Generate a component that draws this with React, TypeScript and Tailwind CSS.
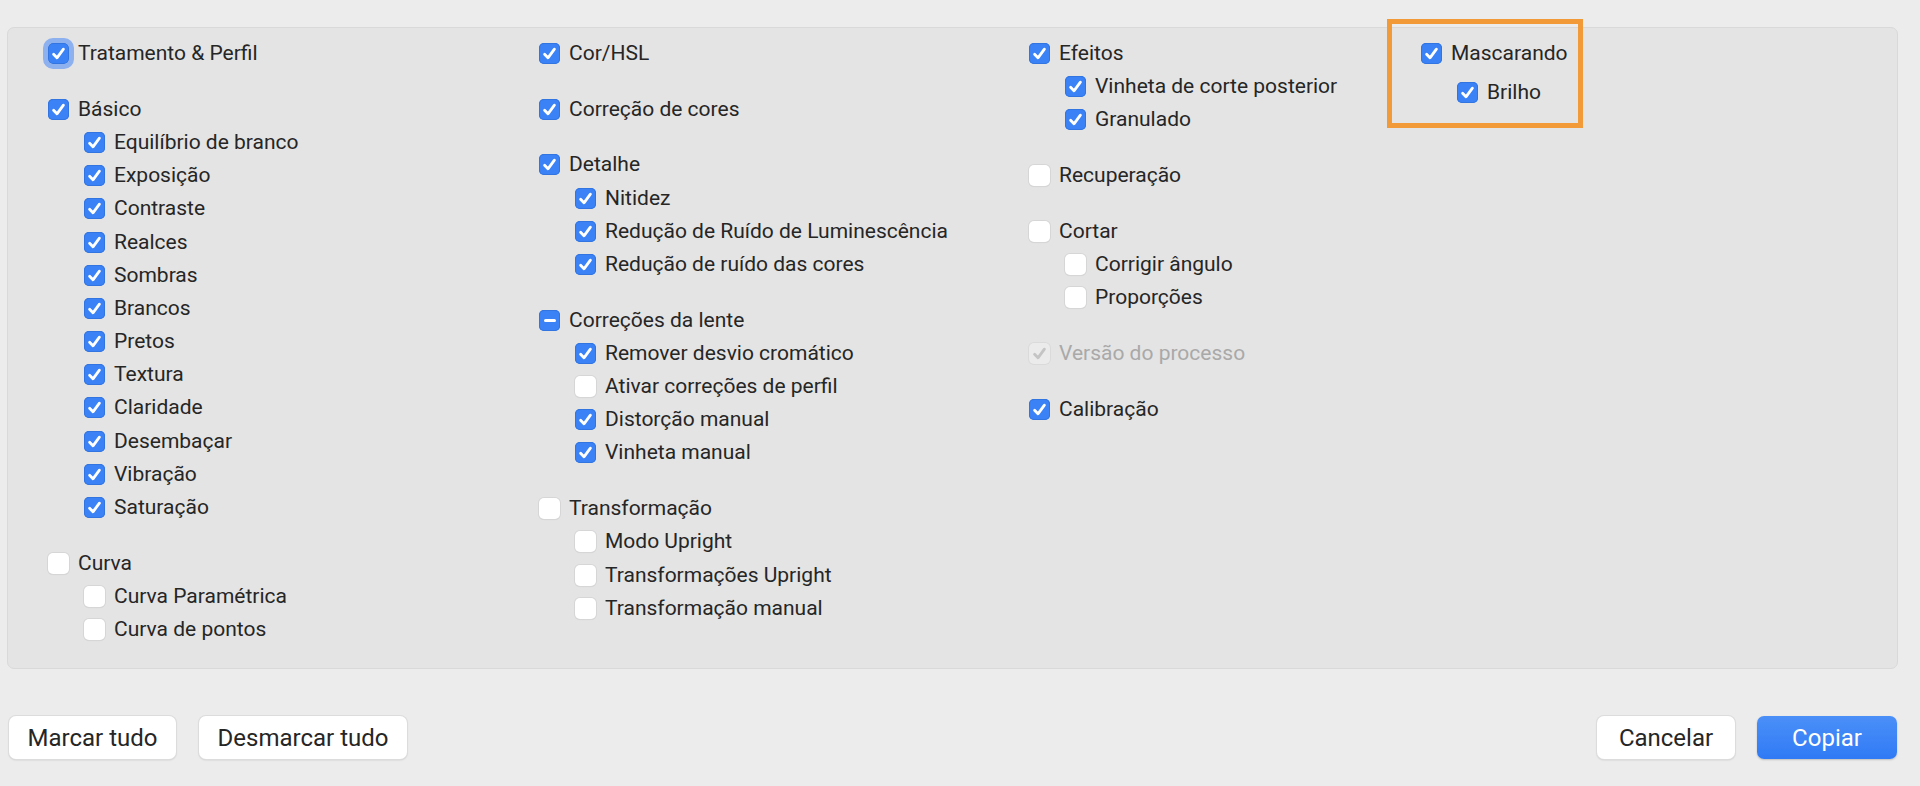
import React from 'react'

type State = 'on' | 'off' | 'mixed' | 'disabled'

interface Item {
  label: string
  state: State
  focus?: boolean
  children?: Item[]
}

const on = (label: string): Item => ({ label, state: 'on' })
const off = (label: string): Item => ({ label, state: 'off' })

const columns: { width: string; groups: Item[] }[] = [
  {
    width: 'w-[491px]',
    groups: [
      { label: 'Tratamento & Perfil', state: 'on', focus: true },
      {
        label: 'Básico',
        state: 'on',
        children: [
          'Equilíbrio de branco',
          'Exposição',
          'Contraste',
          'Realces',
          'Sombras',
          'Brancos',
          'Pretos',
          'Textura',
          'Claridade',
          'Desembaçar',
          'Vibração',
          'Saturação',
        ].map(on),
      },
      { label: 'Curva', state: 'off', children: [off('Curva Paramétrica'), off('Curva de pontos')] },
    ],
  },
  {
    width: 'w-[490px]',
    groups: [
      on('Cor/HSL'),
      on('Correção de cores'),
      {
        label: 'Detalhe',
        state: 'on',
        children: [on('Nitidez'), on('Redução de Ruído de Luminescência'), on('Redução de ruído das cores')],
      },
      {
        label: 'Correções da lente',
        state: 'mixed',
        children: [
          on('Remover desvio cromático'),
          off('Ativar correções de perfil'),
          on('Distorção manual'),
          on('Vinheta manual'),
        ],
      },
      {
        label: 'Transformação',
        state: 'off',
        children: [off('Modo Upright'), off('Transformações Upright'), off('Transformação manual')],
      },
    ],
  },
  {
    width: 'w-[392px]',
    groups: [
      { label: 'Efeitos', state: 'on', children: [on('Vinheta de corte posterior'), on('Granulado')] },
      off('Recuperação'),
      { label: 'Cortar', state: 'off', children: [off('Corrigir ângulo'), off('Proporções')] },
      { label: 'Versão do processo', state: 'disabled' },
      on('Calibração'),
    ],
  },
]

function Box({ state, focus }: { state: State; focus?: boolean }) {
  const filled = state === 'on' || state === 'mixed'
  return (
    <span
      className={
        'relative flex h-[21px] w-[21px] shrink-0 items-center justify-center rounded-[5px] ' +
        (filled
          ? 'bg-[#3a82f6] shadow-[inset_0_0_0_1px_#3274e0]'
          : state === 'disabled'
            ? 'bg-[#ebebeb] shadow-[0_0_0_1px_#dadada]'
            : 'bg-white shadow-[0_0_0_1px_#d6d6d6,0_1px_1px_rgba(0,0,0,0.08)]') +
        (focus ? ' outline-[5px] outline-solid outline-[#8db0ef]' : '')
      }
    >
      {(state === 'on' || state === 'disabled') && (
        <svg viewBox="0 0 21 21" className="h-[21px] w-[21px]">
          <path
            d="M5.6 11.2 L9 14.8 L15.4 6.2"
            fill="none"
            stroke={state === 'disabled' ? '#c4c4c4' : '#ffffff'}
            strokeWidth="2.8"
            strokeLinecap="round"
            strokeLinejoin="round"
          />
        </svg>
      )}
      {state === 'mixed' && <span className="h-[3px] w-[12px] rounded-full bg-white" />}
    </span>
  )
}

function Row({ item, indent }: { item: Item; indent?: boolean }) {
  return (
    <div className={'flex h-[33.2px] items-center gap-[9px] ' + (indent ? 'pl-[36px]' : '')}>
      <Box state={item.state} focus={item.focus} />
      <span
        className={
          'whitespace-nowrap text-[21px] leading-none ' +
          (item.state === 'disabled' ? 'text-[#a9a9a9]' : 'text-[#262626]')
        }
      >
        {item.label}
      </span>
    </div>
  )
}

function Group({ item }: { item: Item }) {
  return (
    <div className="flex flex-col">
      <Row item={item} />
      {item.children?.map((c) => <Row key={c.label} item={c} indent />)}
    </div>
  )
}

function Button({ label, primary, w }: { label: string; primary?: boolean; w: string }) {
  return (
    <button
      className={
        'flex h-[43px] items-center justify-center rounded-[7px] text-[24px] ' +
        w +
        (primary
          ? ' bg-gradient-to-b from-[#4b90f8] to-[#2f7af5] text-white shadow-[0_1px_2px_rgba(0,0,0,0.2)]'
          : ' bg-white text-[#262626] shadow-[0_0_0_1px_#dcdcdc,0_1px_2px_rgba(0,0,0,0.18)]')
      }
    >
      {label}
    </button>
  )
}

export default function App() {
  return (
    <div
      className="flex h-[786px] w-[1920px] flex-col bg-[#ececec]"
      style={{ fontFamily: 'Roboto, "Liberation Sans", sans-serif' }}
    >
      {/* Settings panel */}
      <div className="relative ml-[7px] mr-[22px] mt-[27px] flex h-[642px] rounded-[7px] border border-[#d9d9d9] bg-[#e4e4e4] pl-[40px] pt-[9px]">
        {columns.map((col, i) => (
          <div key={i} className={'flex flex-col gap-[22.5px] ' + col.width}>
            {col.groups.map((g) => (
              <Group key={g.label} item={g} />
            ))}
          </div>
        ))}
        <div className="flex flex-col">
          <Row item={on('Mascarando')} />
          <div className="mt-[6px]">
            <Row item={on('Brilho')} indent />
          </div>
        </div>

        {/* highlight annotation */}
        <div className="pointer-events-none absolute left-[1379px] top-[-9px] h-[109px] w-[196px] border-[5px] border-[#f29a38]" />
      </div>

      {/* Footer buttons */}
      <div className="mt-[47px] flex items-center justify-between pl-[9px] pr-[23px]">
        <div className="flex gap-[23px]">
          <Button label="Marcar tudo" w="w-[167px]" />
          <Button label="Desmarcar tudo" w="w-[208px]" />
        </div>
        <div className="flex gap-[22px]">
          <Button label="Cancelar" w="w-[138px]" />
          <Button label="Copiar" w="w-[140px]" primary />
        </div>
      </div>
    </div>
  )
}
